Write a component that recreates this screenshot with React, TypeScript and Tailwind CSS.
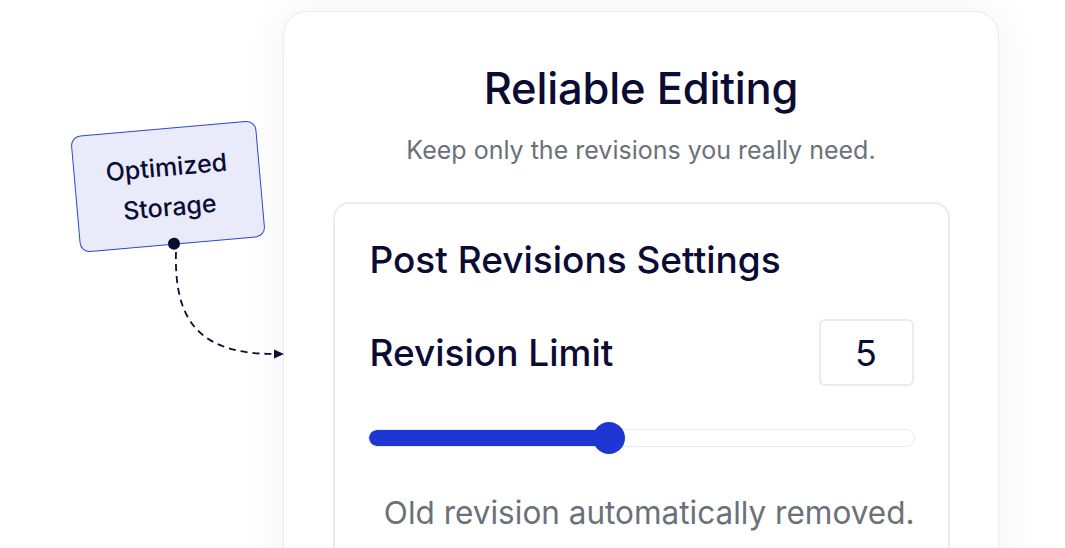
import React from "react";

export default function App() {
  return (
    <div
      className="relative w-[1065px] h-[548px] overflow-hidden bg-white"
      style={{ fontFamily: "Inter, 'Noto Sans', sans-serif" }}
    >
      <div className="flex pl-[283px] pt-[11px]">
        <div className="w-[716px] h-[600px] rounded-[24px] border border-[#ebebee] bg-white shadow-[0_0_48px_rgba(0,0,0,0.06)] flex flex-col items-center pt-[50px]">
          <h1 className="text-[43.5px] leading-[52px] font-medium text-[#0b0b33] tracking-[-0.2px]">
            Reliable Editing
          </h1>
          <p className="mt-[20px] text-[25px] leading-[32px] text-[#6b7178]">
            Keep only the revisions you really need.
          </p>
          <div className="mt-[36px] w-[617px] rounded-[16px] border-2 border-[#e8ebf3] bg-white px-[33px] pt-[34px] pb-[40px] flex flex-col">
            <h2 className="pl-[2px] text-[37px] leading-[44px] font-medium text-[#0b0b33]">
              Post Revisions Settings
            </h2>
            <div className="mt-[37px] flex items-center justify-between pl-[2px] pr-[1px]">
              <span className="text-[37px] leading-[44px] font-medium text-[#0b0b33]">
                Revision Limit
              </span>
              <div className="w-[95px] h-[67px] rounded-[6px] border-2 border-[#e8ebf3] flex items-center justify-center text-[36px] text-[#0b0b33]">
                5
              </div>
            </div>
            <div className="mt-[36px] relative h-[32px] flex items-center">
              <div className="w-full h-[18px] rounded-full border border-[#e6e9f2] bg-white overflow-hidden">
                <div className="h-full w-[241px] bg-[#1e36d4] rounded-full" />
              </div>
              <div className="absolute left-[225px] top-0 w-[32px] h-[32px] rounded-full bg-[#1e36d4]" />
            </div>
            <p className="mt-[39px] text-right text-[31.5px] leading-[40px] text-[#6b7178]">
              Old revision automatically removed.
            </p>
          </div>
        </div>
      </div>

      {/* Annotation note */}
      <div className="absolute left-[75px] top-[128px] w-[186px] h-[117px] rotate-[-5deg] rounded-[10px] border-[1.5px] border-[#2f45d8] bg-[#e9ebfb] flex flex-col items-center justify-center text-[25px] leading-[40px] font-medium text-[#0b0b33]">
        <span>Optimized</span>
        <span>Storage</span>
        <div className="absolute bottom-[-6px] left-[87px] w-[12px] h-[12px] rounded-full bg-[#0b0b33]" />
      </div>
      <svg className="absolute left-0 top-0" width="300" height="400" viewBox="0 0 300 400">
        <path
          d="M176 252 C 174 322, 200 354, 275 354"
          fill="none"
          stroke="#0b0b33"
          strokeWidth="1.8"
          strokeDasharray="7 5"
        />
        <polygon points="274,349.5 284,354 274,358.5" fill="#0b0b33" />
      </svg>
    </div>
  );
}
